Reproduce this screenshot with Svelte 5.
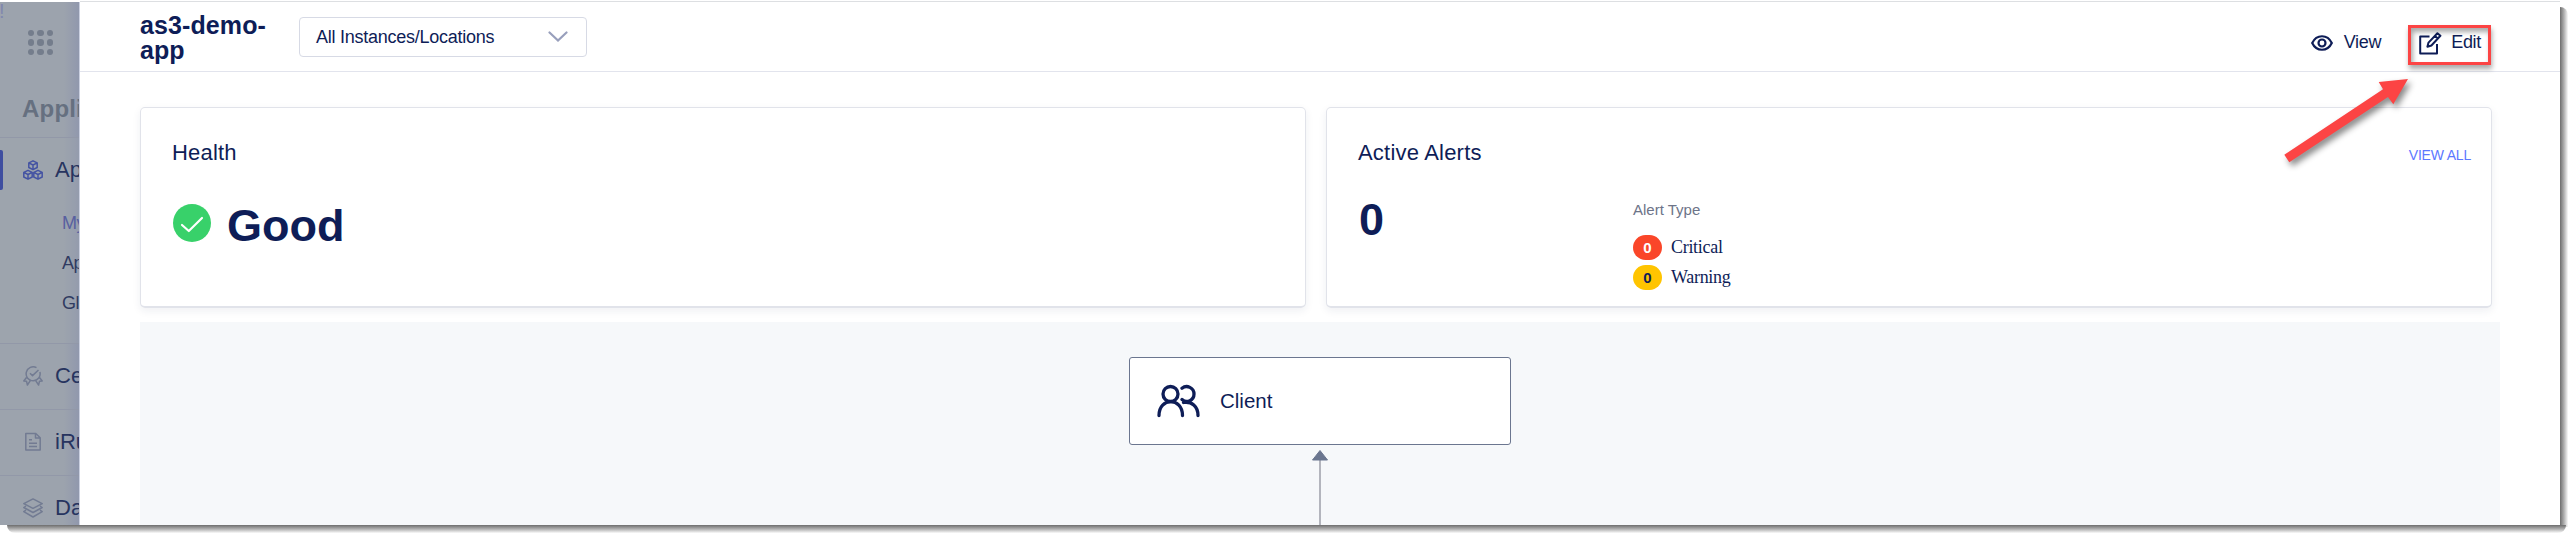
<script>
  const counts = [
    { kind: 'critical', label: 'Critical', n: 0 },
    { kind: 'warning', label: 'Warning', n: 0 }
  ];
  const dots = [0, 1, 2, 3, 4, 5, 6, 7, 8];
</script>

<div class="page">
<main class="frame">
  <aside>
    <span class="mark">!</span>
    <div class="launcher">{#each dots as d (d)}<i></i>{/each}</div>
    <h2>Appli</h2>
    <div class="group">
      <div class="item active">
        <svg width="20" height="20" viewBox="0 0 20 20" fill="none" stroke="#4453a3" stroke-width="1.5" stroke-linejoin="round">
          <path d="M10 .8l4.2 2.1v4.6L10 9.700 5.800 7.500V2.900zM5.800 2.900L10 5l4.200-2.100M10 5v4.700" />
          <path d="M5 10.300l4.200 2.100V17L5 19.200.8 17v-4.600zM.8 12.400L5 14.500l4.200-2.100M5 14.500v4.700" />
          <path d="M15 10.300l4.200 2.100V17L15 19.200 10.800 17v-4.600zM10.800 12.400l4.200 2.100 4.200-2.100M15 14.500v4.700" />
        </svg>
        <span>Ap</span>
      </div>
      <div class="sub current">My</div>
      <div class="sub">Ap</div>
      <div class="sub">Gl</div>
    </div>
    <div class="item row">
      <svg width="20" height="20" viewBox="0 0 20 20" fill="none" stroke="#727b92" stroke-width="1.500" stroke-linejoin="round">
        <path d="M13.500 1.700A7 7 0 1 0 16.900 6M7 7.300l2.500 2.300 6-5.600M3.500 11.500L.8 15l2.700.2.900 3.800 3.600-5.300M16.500 11.500l2.700 3.500-2.700.2-.9 3.800-3.600-5.300" />
      </svg>
      <span>Ce</span>
    </div>
    <div class="item row">
      <svg width="20" height="20" viewBox="0 0 20 20" fill="none" stroke="#727b92" stroke-width="1.500" stroke-linejoin="round">
        <path d="M2.800 1.500h10l4.400 4.200v12.200H2.800zM12.500 1.500V6H17M6 7.800h3M6 11.200h8M6 14.400h8" />
      </svg>
      <span>iRu</span>
    </div>
    <div class="item row">
      <svg width="20" height="20" viewBox="0 0 20 20" fill="none" stroke="#727b92" stroke-width="1.500" stroke-linejoin="round">
        <path d="M10 .9l9.200 4.700L10 10.300.8 5.600zM3 8L.8 9.500 10 14.500l9.200-5L17 8M3 12.200L.8 13.700 10 19l9.200-5.300-2.200-1.500" />
      </svg>
      <span>Da</span>
    </div>
  </aside>

  <section class="panel">
    <header>
      <h1>as3-demo-app</h1>
      <div class="select">
        <span>All Instances/Locations</span>
        <svg width="20" height="12" viewBox="0 0 20 12"><path d="M1.500 1.500L10 9.500l8.500-8" fill="none" stroke="#989fbc" stroke-width="2.200" stroke-linecap="round" /></svg>
      </div>
      <div class="actions">
        <div class="view">
          <svg width="22" height="16" viewBox="0 0 22 16" fill="none" stroke="#0e1d57" stroke-width="2.200">
            <path d="M1.200 8C5.500-1 16.500-1 20.800 8 16.500 17 5.500 17 1.200 8z" /><circle cx="11" cy="8" r="3.500" />
          </svg>
          <span>View</span>
        </div>
        <div class="edit">
          <svg width="23" height="23" viewBox="0 0 23 23" fill="none" stroke="#0e1d57" stroke-width="2" stroke-linejoin="round">
            <path d="M10.500 4.500H1.200v17h16.800V12" />
            <path d="M18.400 1.200l3 2.600-9 9.700-4 1.300 1.100-4.200zM16 4l3 2.700" />
          </svg>
          <span>Edit</span>
        </div>
      </div>
    </header>

    <div class="content">
      <div class="cards">
        <article>
          <h3>Health</h3>
          <div class="status">
            <svg width="38" height="38" viewBox="0 0 38 38"><circle cx="19" cy="19" r="19" fill="#38d16a" /><path d="M9 21l6.800 6L29 14" fill="none" stroke="#fff" stroke-width="2.200" stroke-linecap="round" stroke-linejoin="round" /></svg>
            <strong>Good</strong>
          </div>
        </article>
        <article>
          <div class="cardhead"><h3>Active Alerts</h3><span class="all">VIEW ALL</span></div>
          <div class="alerts">
            <strong>0</strong>
            <div class="types">
              <div class="caption">Alert Type</div>
              {#each counts as c (c.kind)}
                <div class="count"><b class={c.kind}>{c.n}</b><span>{c.label}</span></div>
              {/each}
            </div>
          </div>
        </article>
      </div>

      <div class="canvas">
        <div class="node">
          <svg width="44" height="34" viewBox="0 0 44 34" fill="none" stroke="#0e1d57" stroke-width="3.300" stroke-linecap="round">
            <circle cx="14.500" cy="10" r="7.500" />
            <path d="M3 31.500C3 13 26.500 13 26.500 31.500M26 4.200C31 .2 38 4 38 10s-7 10-12 5.500M27.500 18.500c8-1.500 14.500 4 14.500 13" />
          </svg>
          <span>Client</span>
        </div>
        <svg class="edge" width="16" height="75" viewBox="0 0 16 75"><path d="M8 9v66" stroke="#b3b5bd" stroke-width="2" /><path d="M8 .5L15.500 10H.5z" fill="#6b768f" stroke="#6b768f" stroke-linejoin="round" /></svg>
      </div>
    </div>
  </section>

  <div class="highlight"></div>
  <svg class="arrow" width="150" height="110" viewBox="0 0 150 110"><path d="M3.300 75.700L102 10.300 97.700 3 127 0l-14.700 25.300L107 18 8.300 83.300z" fill="#fc4444" /></svg>
</main>
</div>

<style>
  :global(body) { margin: 0; background: #fff; overflow: hidden; }
  .page { width: 2575px; height: 540px; overflow: hidden; }
  .frame {
    position: relative; display: flex; width: 2560px; height: 525px; background: #fff;
    font-family: "Liberation Sans", Arial, sans-serif; color: #0e1d57;
  }
  .frame::before, .frame::after { content: ""; position: absolute; }
  .frame::before { left: 2560px; top: 7px; width: 8px; height: 520px; background: linear-gradient(90deg, #6d6d6d, #b0b0b0 50%, #fafafa); border-radius: 0 8px 0 0; }
  .frame::after { left: 7px; top: 525px; width: 2559px; height: 8px; background: linear-gradient(#6d6d6d, #b0b0b0 50%, #fafafa); border-radius: 0 0 8px 8px; }
  h1, h2, h3 { margin: 0; }
  svg { flex: none; display: block; }
  aside {
    position: relative; box-sizing: border-box; width: 80px; height: 523px; margin-top: 2px; overflow: hidden; flex: none;
    background: linear-gradient(90deg, transparent 64px, #858dad80), #9ca3ad; border-right: 1px solid #cbd0e0; white-space: nowrap;
  }
  .mark { position: absolute; left: 0; top: -3px; font-size: 20px; line-height: 24px; text-indent: -1px; color: #8188ae; }
  .launcher { display: grid; grid-template-columns: repeat(3, 6.400px); gap: 3px; padding: 28px 0 0 28px; height: 25.200px; }
  .launcher i { width: 6.400px; height: 6.400px; border-radius: 50%; background: #747d8c; }
  h2 { font-size: 24px; line-height: 28px; color: #667080; padding: 40px 0 0 22px; height: 41.800px; letter-spacing: .2px; }
  .group { box-sizing: border-box; height: 206px; border-top: 1px solid #9298a8; padding-top: 12px; background: #a0a8ae40; }
  .item { display: flex; align-items: center; gap: 12px; padding-left: 23px; font-size: 22px; color: #27345f; }
  .active { height: 40px; position: relative; }
  .active::before { content: ""; position: absolute; left: 0; top: 0; width: 3px; height: 40px; border-radius: 0 2px 2px 0; background: #3f4ea0; }
  .sub { padding-left: 62px; font-size: 18px; line-height: 40px; letter-spacing: -.5px; color: #303b61; }
  .sub.current { color: #5860a0; padding-top: 13px; }
  .row { box-sizing: border-box; height: 66px; border-top: 1px solid #9298a8; }
  .panel { width: 2480px; height: 524px; margin-top: 1px; border-top: 1px solid #dddfe2; box-sizing: border-box; }
  header { box-sizing: border-box; height: 70px; border-bottom: 1px solid #e2e4ed; display: flex; align-items: flex-start; padding-left: 60px; }
  h1 { width: 159px; padding-top: 11px; font-size: 25px; line-height: 25px; letter-spacing: .1px; }
  .select { box-sizing: border-box; width: 288px; height: 40px; margin-top: 15px; border: 1px solid #d7dae5; border-radius: 4px; display: flex; align-items: center; justify-content: space-between; padding: 0 18px 0 16px; font-size: 18px; }
  .select span { letter-spacing: -.25px; }
  .actions { margin-left: auto; display: flex; align-items: center; padding: 21px 79px 0 0; font-size: 18px; letter-spacing: -.3px; }
  .view, .edit { display: flex; align-items: center; height: 40px; }
  .view { gap: 11px; margin-right: 38px; }
  .edit { gap: 9px; }
  .view span, .edit span { position: relative; top: -1px; }
  .content { padding: 35px 60px 0; }
  .cards { display: flex; gap: 20px; padding-right: 8px; }
  article { box-sizing: border-box; flex: 1; height: 201px; padding: 32px 20px 0 31px; border: 1px solid #e1e3ea; border-bottom-width: 2px; border-radius: 5px; box-shadow: 0 3px 9px #1e2d5a12; }
  h3 { font-size: 22px; line-height: 26px; font-weight: 400; letter-spacing: .2px; }
  .status { display: flex; align-items: center; gap: 16px; padding: 31px 0 0 1px; }
  strong { font-size: 45px; line-height: 52px; }
  .status strong { position: relative; top: 3px; }
  .cardhead { display: flex; justify-content: space-between; }
  .all { font-size: 14px; line-height: 30px; letter-spacing: -.2px; color: #5c78ff; }
  .alerts { display: flex; padding-top: 24px; }
  .alerts strong { width: 274px; padding-left: 1px; }
  .caption { font-size: 15px; line-height: 18px; color: #6d7488; padding: 7px 0 13px; }
  .count { display: flex; align-items: center; gap: 9px; height: 30px; font: 18px/25px "Liberation Serif", serif; letter-spacing: -.3px; }
  .count b { width: 29px; height: 25px; border-radius: 13px; text-align: center; font: 700 15px/25px "Liberation Sans", sans-serif; letter-spacing: 0; }
  .critical { background: #fa4629; color: #fff; }
  .warning { background: #ffc400; }
  .canvas { box-sizing: border-box; height: 203px; margin-top: 14px; padding-top: 35px; background: #f6f8fa; display: flex; flex-direction: column; align-items: center; overflow: hidden; }
  .node { box-sizing: border-box; flex: none; width: 382px; height: 88px; border: 1.500px solid #6b768f; border-radius: 3px; background: #fff; display: flex; align-items: center; gap: 20px; padding-left: 26px; font-size: 20.500px; }
  .edge { margin-top: 5px; }
  .highlight { position: absolute; left: 2408px; top: 25px; width: 77px; height: 34px; border: 3px solid #fc4444; box-shadow: 1px 4px 5px #0005, inset 2px 4px 5px #0005; }
  .arrow { position: absolute; left: 2281px; top: 79px; filter: drop-shadow(3px 4px 3px #0007); }
</style>
